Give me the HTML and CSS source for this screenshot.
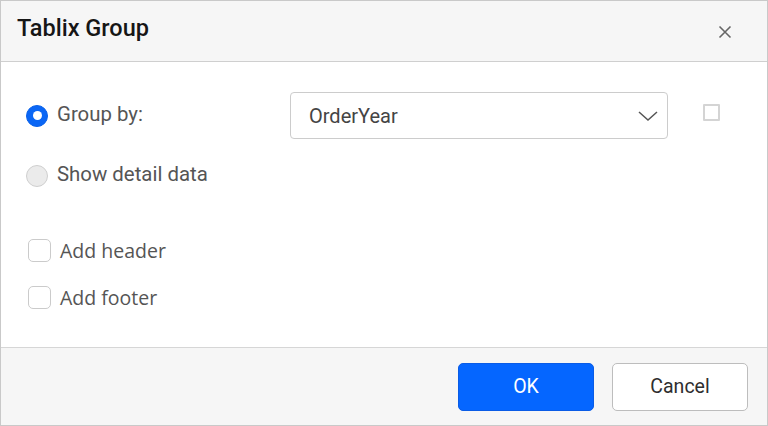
FILE: index.html
```html
<!DOCTYPE html>
<html>
<head>
<meta charset="utf-8">
<link rel="stylesheet" href="styles.css">
</head>
<body>
<div class="dialog">
  <div class="header">
    <div class="title">Tablix Group</div>
    <svg class="close" width="14" height="14" viewBox="0 0 14 14"><path d="M1.5 1.5 L12.5 12.5 M12.5 1.5 L1.5 12.5" stroke="#666" stroke-width="1.6" fill="none"/></svg>
  </div>
  <div class="content">
    <div class="row row-first">
      <div class="radio-label">
        <span class="radio checked"></span>
        <span class="label">Group by:</span>
      </div>
      <div class="select">
        <span class="select-text">OrderYear</span>
        <svg class="chevron" width="20" height="10" viewBox="0 0 20 10"><path d="M1 1 L10 9 L19 1" stroke="#555" stroke-width="1.5" fill="none"/></svg>
      </div>
      <span class="small-box"></span>
    </div>
    <div class="row row-second">
      <div class="radio-label">
        <span class="radio"></span>
        <span class="label">Show detail data</span>
      </div>
    </div>
    <div class="check-row check-first">
      <span class="checkbox"></span>
      <span class="check-label">Add header</span>
    </div>
    <div class="check-row">
      <span class="checkbox"></span>
      <span class="check-label">Add footer</span>
    </div>
  </div>
  <div class="footer">
    <button class="btn btn-primary">OK</button>
    <button class="btn btn-default">Cancel</button>
  </div>
</div>
</body>
</html>
```
FILE: styles.css
```css
html, body {
  margin: 0;
  padding: 0;
  background: #ffffff;
}
.dialog {
  width: 768px;
  height: 426px;
  box-sizing: border-box;
  border: 1px solid #c9c9c9;
  display: flex;
  flex-direction: column;
  background: #fff;
  font-family: Roboto, "Liberation Sans", sans-serif;
}
.header {
  height: 60px;
  flex: none;
  background: #f6f6f6;
  border-bottom: 1px solid #cfcfcf;
  display: flex;
  align-items: center;
  justify-content: space-between;
  padding: 0 35px 0 16px;
}
.title {
  font-size: 23.5px;
  font-weight: 500;
  color: #161616;
  padding-bottom: 7px;
}
.close {
  display: block;
  margin-top: 2px;
}
.content {
  flex: 1;
  padding: 30px 0 0 25px;
}
.row {
  display: flex;
  align-items: center;
  height: 47px;
}
.row-second {
  margin-top: 13px;
}
.radio-label {
  display: flex;
  align-items: center;
  width: 264px;
}
.radio {
  width: 22px;
  height: 22px;
  box-sizing: border-box;
  border-radius: 50%;
  border: 1px solid #cfcfcf;
  background: #ebebeb;
  flex: none;
  position: relative;
}
.radio.checked {
  background: #0a66f5;
  border-color: #0a62ea;
}
.radio.checked::after {
  content: "";
  position: absolute;
  left: 50%;
  top: 50%;
  width: 9px;
  height: 9px;
  margin: -4.5px 0 0 -4.5px;
  border-radius: 50%;
  background: #fff;
}
.label {
  margin-left: 9px;
  font-size: 20.4px;
  color: #555555;
  padding-bottom: 4px;
}
.select {
  width: 378px;
  height: 47px;
  box-sizing: border-box;
  border: 1px solid #cccccc;
  border-radius: 4px;
  display: flex;
  align-items: center;
  justify-content: space-between;
  padding: 0 9px 0 18px;
}
.select-text {
  font-size: 20px;
  color: #444444;
}
.chevron {
  display: block;
}
.small-box {
  align-self: flex-start;
  margin: 12px 0 0 35px;
  width: 17px;
  height: 17px;
  box-sizing: border-box;
  border: 2px solid #d4d4d4;
  border-radius: 1px;
}
.check-row {
  display: flex;
  align-items: center;
  height: 24px;
  margin-left: 2px;
  margin-top: 23px;
}
.check-first {
  margin-top: 39px;
}
.checkbox {
  width: 23px;
  height: 23px;
  box-sizing: border-box;
  border: 1.5px solid #cbcbcb;
  border-radius: 5px;
  flex: none;
}
.check-label {
  margin-left: 9px;
  font-family: "Open Sans", "Noto Sans", sans-serif;
  font-size: 19.5px;
  color: #555555;
}
.footer {
  height: 78px;
  flex: none;
  box-sizing: border-box;
  background: #f6f6f6;
  border-top: 1px solid #d6d6d6;
  display: flex;
  align-items: center;
  justify-content: flex-end;
  gap: 18px;
  padding-right: 19px;
}
.btn {
  width: 136px;
  height: 48px;
  box-sizing: border-box;
  border-radius: 5px;
  font-family: Roboto, "Liberation Sans", sans-serif;
  font-size: 19.5px;
  padding: 0;
  margin: 0;
}
.btn-primary {
  background: #0566ff;
  border: 1px solid #0a5ce6;
  color: #ffffff;
}
.btn-default {
  background: #ffffff;
  border: 1px solid #bdbdbd;
  color: #2e2e2e;
}
```
